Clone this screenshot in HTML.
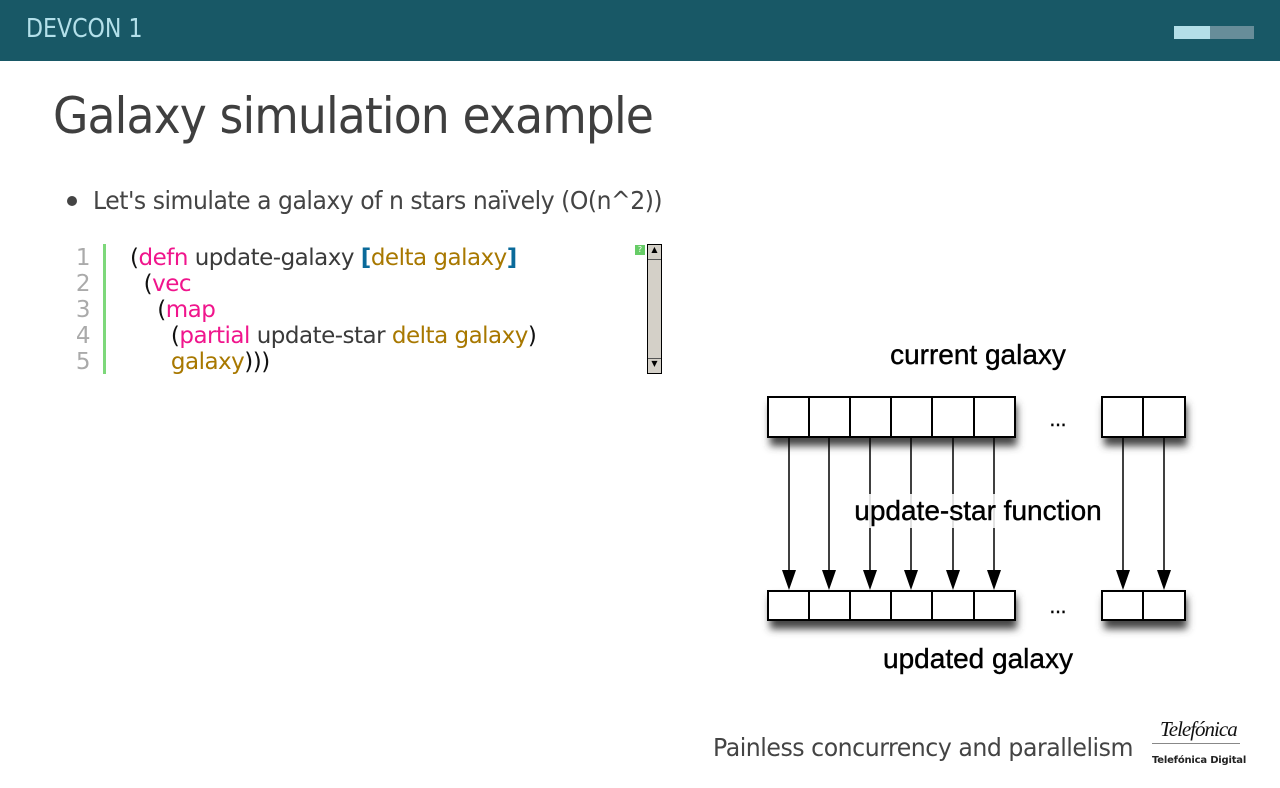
<!DOCTYPE html>
<html><head><meta charset="utf-8"><style>
body{margin:0;width:1280px;height:788px;background:#fff;position:relative;overflow:hidden;font-family:"DejaVu Sans","Liberation Sans",sans-serif}
.hdr{position:absolute;left:0;top:0;width:1280px;height:61px;background:#185866}
.hdr .t{position:absolute;left:26px;top:14px;color:#b3e0ea;font-size:26px;transform:scaleX(0.85);transform-origin:left}
.b1{position:absolute;left:1174px;top:26px;width:36px;height:13px;background:#b3dfe8}
.b2{position:absolute;left:1210px;top:26px;width:44px;height:13px;background:#678d99}
h1{position:absolute;left:53px;top:87px;margin:0;font-weight:normal;font-size:50px;color:#3f3f3f;letter-spacing:-1px;transform:scaleX(0.915);transform-origin:left;white-space:nowrap}
.bul{position:absolute;left:93px;top:186px;font-size:25px;color:#444;letter-spacing:-0.5px;transform:scaleX(0.94);transform-origin:left;white-space:nowrap}
.dot{position:absolute;left:67px;top:196px;width:10px;height:10px;border-radius:50%;background:#444}
.code{position:absolute;left:60px;top:245px;font-size:23px;line-height:26px;color:#3a3a3a;letter-spacing:-0.5px}
.ln{position:absolute;left:0;width:30px;text-align:right;color:#aaa}
.gut{position:absolute;left:103px;top:244px;width:3px;height:130px;background:#7dd87a}
.k{color:#f0158c}.v{color:#a87800}.b{color:#0a6a9a;font-weight:bold}.p{color:#111}
.sb{position:absolute;left:647px;top:244px;width:15px;height:130px;background:#d4d0c8;border:1px solid #000;box-sizing:border-box}
.foot{position:absolute;left:713px;top:733px;font-size:25px;color:#444;letter-spacing:-0.5px;transform:scaleX(0.945);transform-origin:left;white-space:nowrap}
</style></head><body>
<div class="hdr"><div class="t">DEVCON 1</div><div class="b1"></div><div class="b2"></div></div>
<h1>Galaxy simulation example</h1>
<div class="dot"></div>
<div class="bul">Let's simulate a galaxy of n stars naïvely (O(n^2))</div>
<div class="gut"></div>
<div class="code">
<div class="ln" style="top:0">1</div><div class="ln" style="top:26px">2</div><div class="ln" style="top:52px">3</div><div class="ln" style="top:78px">4</div><div class="ln" style="top:104px">5</div>
<div style="position:absolute;left:70px;top:0;white-space:pre"><span class="p">(</span><span class="k">defn</span> update-galaxy <span class="b">[</span><span class="v">delta galaxy</span><span class="b">]</span>
<span class="p">  (</span><span class="k">vec</span>
<span class="p">    (</span><span class="k">map</span>
<span class="p">      (</span><span class="k">partial</span> update-star <span class="v">delta galaxy</span><span class="p">)</span>
      <span class="v">galaxy</span><span class="p">)))</span></div>
</div>
<div style="position:absolute;left:635px;top:245px;width:10px;height:10px;background:#6c6;color:#fff;font-size:8px;text-align:center">?</div>
<div class="sb">
<div style="position:absolute;left:0;top:0;width:13px;height:14px;background:#d4d0c8;border-bottom:1px solid #555;font-size:8px;text-align:center">▲</div>
<div style="position:absolute;left:0;bottom:0;width:13px;height:14px;background:#d4d0c8;border-top:1px solid #555;font-size:8px;text-align:center">▼</div>
</div>
<svg style="position:absolute;left:740px;top:330px" width="480" height="360" viewBox="740 330 480 360">
<defs><filter id="s" x="-20%" y="-50%" width="140%" height="220%"><feGaussianBlur stdDeviation="4"/></filter></defs>
<rect x="770" y="404" width="247" height="42" fill="#444" filter="url(#s)"/>
<rect x="1104" y="404" width="83" height="42" fill="#444" filter="url(#s)"/>
<rect x="770" y="597" width="247" height="32" fill="#444" filter="url(#s)"/>
<rect x="1104" y="597" width="83" height="32" fill="#444" filter="url(#s)"/>
<g fill="#fff" stroke="#000" stroke-width="2">
<rect x="768" y="397" width="247" height="40"/><rect x="1102" y="397" width="83" height="40"/>
<rect x="768" y="591" width="247" height="29"/><rect x="1102" y="591" width="83" height="29"/>
<path d="M809,397V437M850,397V437M891,397V437M932,397V437M974,397V437M1143,397V437M809,591V620M850,591V620M891,591V620M932,591V620M974,591V620M1143,591V620"/>
</g>
<g stroke="#000" stroke-width="1.5" fill="#000">
<path d="M789,437V572"/><path d="M829,437V572"/><path d="M870,437V572"/><path d="M911,437V572"/><path d="M953,437V572"/><path d="M994,437V572"/><path d="M1123,437V572"/><path d="M1164,437V572"/>
<g stroke="none"><path d="M782,570h14l-7,20z"/><path d="M822,570h14l-7,20z"/><path d="M863,570h14l-7,20z"/><path d="M904,570h14l-7,20z"/><path d="M946,570h14l-7,20z"/><path d="M987,570h14l-7,20z"/><path d="M1116,570h14l-7,20z"/><path d="M1157,570h14l-7,20z"/></g>
</g>
<g font-family="Liberation Sans, sans-serif" font-size="28" text-anchor="middle" fill="#000" stroke="#000" stroke-width="0.4">
<rect x="848" y="494" width="260" height="34" fill="#fff" stroke="none" opacity="0.85"/>
<text x="978" y="364">current galaxy</text>
<text x="978" y="520">update-star function</text>
<text x="978" y="668">updated galaxy</text>
<text x="1058" y="426" font-size="20">...</text>
<text x="1058" y="613" font-size="20">...</text>
</g>
</svg>
<div class="foot">Painless concurrency and parallelism</div>
<div style="position:absolute;left:1160px;top:717px;font-family:'Liberation Serif',serif;font-style:italic;font-size:21px;color:#111;letter-spacing:-1px">Telefónica</div>
<div style="position:absolute;left:1152px;top:743px;width:88px;height:1px;background:#888"></div>
<div style="position:absolute;left:1152px;top:755px;font-size:10px;font-weight:bold;color:#222;letter-spacing:-0.2px">Telefónica Digital</div>
</body></html>
